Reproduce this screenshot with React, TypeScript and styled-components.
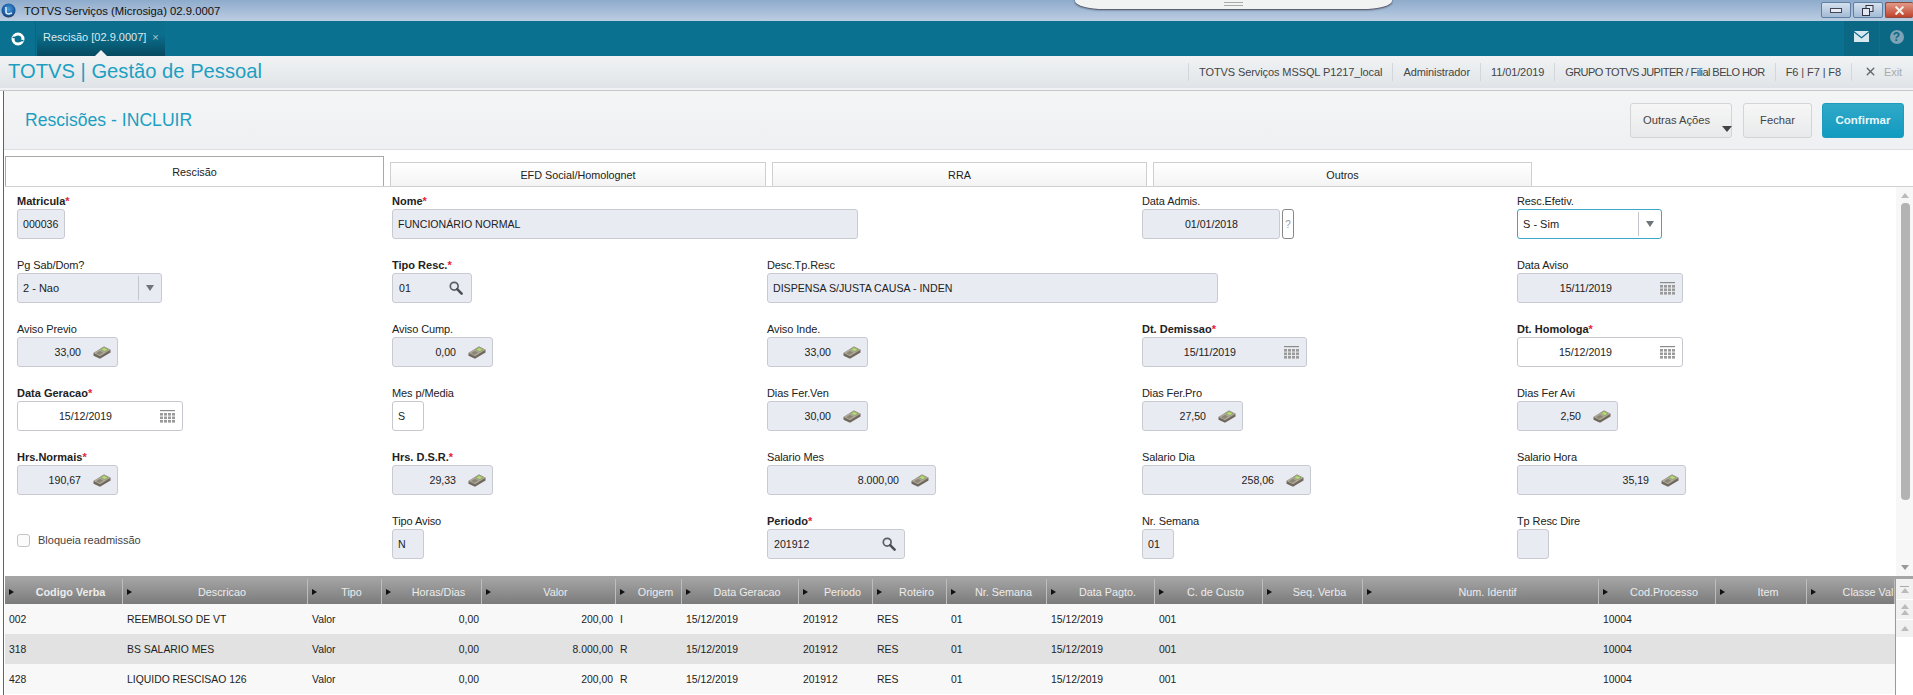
import React from 'react';
import styled, { createGlobalStyle } from 'styled-components';
import { X } from 'lucide-react';

const GlobalStyle = createGlobalStyle`
  html, body {
    margin: 0;
    padding: 0;
    background: #fff;
    overflow: hidden;
  }
  * { box-sizing: border-box; }
  body {
    font-family: "Liberation Sans", Arial, sans-serif;
    font-size: 11px;
    color: #222;
  }
`;

const Page = styled.div`
  width: 1913px;
  height: 695px;
  display: flex;
  flex-direction: column;
  overflow: hidden;
  position: relative;
`;

/* janela */
const TitleBar = styled.div`
  height: 21px;
  flex: none;
  display: flex;
  align-items: center;
  padding-left: 1px;
  gap: 8px;
  background: linear-gradient(#8eabcc, #bccde2);
  font-size: 11.3px;
  color: #111;
`;

const DockHandle = styled.div`
  position: absolute;
  left: 1075px;
  top: -6px;
  width: 317px;
  height: 15px;
  display: flex;
  flex-direction: column;
  align-items: center;
  justify-content: flex-end;
  gap: 2px;
  padding-bottom: 3px;
  background: #f1f2f2;
  border-radius: 0 0 30px 30px / 0 0 8px 8px;
  box-shadow: 0 1px 2px #445;
  span {
    width: 19px;
    height: 1px;
    background: #aaa;
  }
`;

const WindowButtons = styled.div`
  margin-left: auto;
  display: flex;
  gap: 2px;
  align-self: flex-start;
  padding-top: 2px;
`;

const WindowButton = styled.div<{ $close?: boolean }>`
  width: ${p => (p.$close ? '28px' : '30px')};
  height: 16px;
  display: flex;
  align-items: center;
  justify-content: center;
  border: 1px solid ${p => (p.$close ? '#8e4a3c' : '#5f7fa3')};
  border-right: ${p => (p.$close ? 'none' : undefined)};
  border-radius: 2px;
  background: ${p =>
    p.$close ? 'linear-gradient(#e09a88, #c0432c)' : 'linear-gradient(#d5e1ee, #a3bbd5)'};
`;

const NavBar = styled.div`
  height: 35px;
  flex: none;
  display: flex;
  background: #0b7190;
`;

const LogoCell = styled.div`
  width: 36px;
  display: flex;
  align-items: center;
  justify-content: center;
  border-right: 1px solid #0a6480;
`;

const NavTab = styled.div`
  width: 128px;
  margin-left: 1px;
  position: relative;
  display: flex;
  align-items: center;
  padding: 0 0 4px 6px;
  gap: 6px;
  color: #d9eaf0;
  background: linear-gradient(#0b6e8c 40%, #064a60);
  &::after {
    content: '';
    position: absolute;
    left: 58px;
    bottom: 0;
    border: 6px solid transparent;
    border-top: none;
    border-bottom: 6px solid #eef0f2;
  }
`;

const NavTabClose = styled.span`
  color: #a9c9d5;
  font-size: 11px;
`;

const NavActions = styled.div`
  margin-left: auto;
  display: flex;
`;

const NavAction = styled.div<{ $wide?: boolean }>`
  width: ${p => (p.$wide ? '33px' : '35px')};
  margin-left: 1px;
  display: flex;
  align-items: center;
  justify-content: center;
  padding-bottom: 4px;
  background: #0a6885;
`;

const HelpMark = styled.span`
  width: 14px;
  height: 14px;
  border-radius: 50%;
  background: #7ea3b4;
  color: #0a6885;
  font-size: 12px;
  font-weight: bold;
  line-height: 14px;
  text-align: center;
`;

/* cabecalho do modulo */
const BrandBar = styled.div`
  height: 35px;
  flex: none;
  display: flex;
  align-items: center;
  padding: 0 0 3px 8px;
  background: linear-gradient(#f1f3f4, #dfe3e7);
  border-bottom: 1px solid #c4c8cc;
  box-shadow: inset 0 -2px 0 #f1f2f3;
  position: relative;
`;

const Brand = styled.div`
  font-size: 20.2px;
  color: #1d9fc2;
`;

const Session = styled.div`
  margin-left: auto;
  display: flex;
  align-items: center;
  color: #444;
`;

const SessionItem = styled.div<{ $tight?: boolean }>`
  height: 18px;
  line-height: 18px;
  padding: 0 10px;
  border-left: 1px solid #d3d6da;
  white-space: nowrap;
  letter-spacing: ${p => (p.$tight ? '-0.56px' : '-0.1px')};
`;

const ExitItem = styled(SessionItem)`
  display: flex;
  align-items: center;
  gap: 7px;
  width: 62px;
  padding: 0 0 0 12px;
  color: #aaa;
`;

/* area principal */
const Main = styled.div`
  flex: 1;
  min-height: 0;
  margin-left: 3px;
  border-left: 1px solid #2d7494;
  padding-left: 1px;
  display: flex;
  flex-direction: column;
`;

const PageHeader = styled.div`
  height: 59px;
  flex: none;
  display: flex;
  align-items: center;
  padding: 0 9px 0 21px;
  background: linear-gradient(#f3f5f5, #eef0f3);
  border-bottom: 1px solid #dcdedf;
  margin-left: -1px;
`;

const PageTitle = styled.h1`
  margin: 0;
  font-size: 17.6px;
  font-weight: normal;
  color: #1d9fc2;
`;

const Actions = styled.div`
  margin-left: auto;
  display: flex;
  gap: 10px;
`;

const ActionButton = styled.button<{ $primary?: boolean }>`
  height: 35px;
  padding: 0;
  font-family: inherit;
  font-size: ${p => (p.$primary ? '11.5px' : '11.2px')};
  border-radius: 3px;
  display: flex;
  align-items: center;
  justify-content: center;
  color: ${p => (p.$primary ? '#e8f7fb' : '#444')};
  font-weight: ${p => (p.$primary ? 'bold' : 'normal')};
  border: 1px solid ${p => (p.$primary ? '#1f9cbd' : '#d2d4d6')};
  background: ${p =>
    p.$primary ? 'linear-gradient(#31a9c8, #119ac0)' : 'linear-gradient(#f6f6f6, #e9eaeb)'};
  width: ${p => (p.$primary ? '82px' : '69px')};
`;

const MenuButton = styled(ActionButton)`
  width: 102px;
  justify-content: flex-start;
  padding-left: 12px;
  margin-right: 1px;
  gap: 12px;
  white-space: nowrap;
  i {
    align-self: flex-end;
    margin-bottom: 5px;
    border: 5px solid transparent;
    border-bottom: none;
    border-top: 6px solid #444;
  }
`;

const Tabs = styled.div`
  height: 36px;
  flex: none;
  display: flex;
  align-items: flex-end;
  gap: 6px;
`;

const Tab = styled.div<{ $active?: boolean; $w: number }>`
  width: ${p => p.$w}px;
  height: ${p => (p.$active ? '30px' : '24px')};
  display: flex;
  align-items: center;
  justify-content: center;
  font-size: 10.8px;
  border: 1px solid ${p => (p.$active ? '#a8a8a8' : '#cfcfcf')};
  border-bottom: none;
  background: ${p => (p.$active ? '#fff' : 'linear-gradient(#fff, #f4f4f4)')};
`;

const FormArea = styled.div`
  height: 390px;
  flex: none;
  display: flex;
  border-top: 1px solid #d0d0d0;
`;

const FormGrid = styled.div`
  flex: 1;
  display: grid;
  grid-template-columns: repeat(5, 375px);
  grid-auto-rows: 64px;
  padding: 7px 0 0 12px;
`;

const Field = styled.div<{ $col: number }>`
  grid-column: ${p => p.$col};
`;

const Label = styled.div<{ $required?: boolean }>`
  height: 15px;
  line-height: 14px;
  font-size: 11px;
  font-weight: ${p => (p.$required ? 'bold' : 'normal')};
  letter-spacing: ${p => (p.$required ? '0' : '-0.1px')};
  color: #222;
  em {
    color: #e8203a;
    font-style: normal;
  }
`;

const Box = styled.div<{ $w: number; $open?: boolean; $focus?: boolean }>`
  width: ${p => p.$w}px;
  height: 30px;
  display: flex;
  align-items: center;
  padding-left: 5px;
  font-size: 10.6px;
  white-space: nowrap;
  color: #222;
  border: 1px solid ${p => (p.$focus ? '#3ba7c5' : p.$open ? '#c5c8cc' : '#c7cad0')};
  border-radius: 3px;
  background: ${p => (p.$open ? '#fff' : '#e8ebf2')};
`;

const NumberBox = styled(Box)`
  justify-content: flex-end;
  gap: 12px;
  padding-right: 6px;
`;

const DateBox = styled(Box)`
  justify-content: flex-end;
  gap: 48px;
  padding-right: 7px;
`;

const PlainDateBox = styled(Box)`
  justify-content: flex-end;
  padding-right: 41px;
`;

const LookupBox = styled(Box)`
  justify-content: space-between;
  padding-left: 6px;
  padding-right: 8px;
`;

const SelectBox = styled(Box)`
  padding-right: 0;
  justify-content: space-between;
  font-size: 11px;
`;

const SelectArrow = styled.div`
  width: 23px;
  height: 28px;
  display: flex;
  align-items: center;
  justify-content: center;
  position: relative;
  &::before {
    content: '';
    position: absolute;
    left: 0;
    top: 2px;
    bottom: 2px;
    width: 1px;
    background: #c2c5ca;
  }
  i {
    border: 4px solid transparent;
    border-bottom: none;
    border-top: 6px solid #6f747c;
  }
`;

const BoxRow = styled.div`
  display: flex;
  gap: 2px;
`;

const HintButton = styled.div`
  width: 12px;
  height: 30px;
  display: flex;
  align-items: center;
  justify-content: center;
  color: #999;
  font-size: 10px;
  border: 1px solid #888;
  border-radius: 3px;
  background: #fff;
`;

const CheckRow = styled.label`
  grid-column: 1;
  display: flex;
  align-items: flex-start;
  gap: 8px;
  padding-top: 20px;
  font-size: 11px;
  color: #444;
`;

const CheckBox = styled.span`
  width: 13px;
  height: 13px;
  border: 1px solid #c4c4c4;
  border-radius: 3px;
  background: #fbfbfb;
`;

const ScrollBar = styled.div`
  width: 17px;
  flex: none;
  display: flex;
  flex-direction: column;
  align-items: center;
  padding: 6px 0 6px 1px;
  background: #f7f7f7;
`;

const Arrow = styled.i<{ $down?: boolean }>`
  border: 4px solid transparent;
  ${p => (p.$down ? 'border-bottom: none;' : 'border-top: none;')}
  ${p => (p.$down ? 'border-top: 5px solid #999;' : 'border-bottom: 5px solid #bbb;')}
`;

const ScrollThumb = styled.div`
  width: 9px;
  height: 297px;
  margin-top: 5px;
  margin-bottom: auto;
  border-radius: 4px;
  background: #b3b3b3;
`;

/* grid de verbas */
const TableArea = styled.div`
  flex: 1;
  min-height: 0;
  display: flex;
  border-top: 3px solid #a4a4a4;
`;

const Table = styled.div`
  width: 1890px;
  flex: none;
  display: grid;
  grid-template-columns: 118px 185px 74px 100px 134px 66px 117px 74px 74px 100px 108px 108px 100px 236px 117px 91px 88px;
  grid-template-rows: 25px repeat(3, 30px);
  align-content: start;
  overflow: hidden;
`;

const HeadCell = styled.div<{ $indent?: number; $strong?: boolean }>`
  position: relative;
  display: flex;
  align-items: center;
  justify-content: center;
  padding-left: ${p => p.$indent ?? 14}px;
  white-space: nowrap;
  font-size: 10.8px;
  font-weight: ${p => (p.$strong ? 'bold' : 'normal')};
  color: #ececec;
  border-right: 1px solid #bdbdbd;
  background: linear-gradient(#a3a3a3, #7b7b7b);
  overflow: hidden;
  &::before {
    content: '';
    position: absolute;
    left: 4px;
    top: 10px;
    border: 3.5px solid transparent;
    border-right: none;
    border-left: 5px solid #111;
  }
`;

const Cell = styled.div<{ $odd: boolean; $right?: boolean }>`
  display: flex;
  align-items: center;
  justify-content: ${p => (p.$right ? 'flex-end' : 'flex-start')};
  padding: ${p => (p.$right ? '0 3px 0 0' : '0 0 0 4px')};
  font-size: 10.4px;
  white-space: nowrap;
  color: #222;
  background: ${p => (p.$odd ? '#f8f8f8' : '#e2e2e2')};
`;

const TableScroll = styled.div`
  flex: 1;
  border-left: 1px solid #9a9a9a;
  display: flex;
  flex-direction: column;
  background: #fff;
`;

const TableScrollButton = styled.div<{ $h: number }>`
  height: ${p => p.$h}px;
  display: flex;
  flex-direction: column;
  align-items: center;
  justify-content: center;
  gap: 1px;
  background: #f1f1f1;
  border-bottom: 1px solid #fff;
  b {
    width: 9px;
    height: 1px;
    background: #a9a9a9;
  }
`;

const CalcIcon = () => (
  <svg width="18" height="13" viewBox="0 0 18 13" style={{ flex: 'none' }}>
    <path d="M0.5 7 L11 0.5 L17.5 3.8 L17.5 6.5 L7 12.8 L0.5 9.8 Z" fill="#6f695d" />
    <path d="M0.5 7 L11 0.5 L17.5 3.8 L7 10.2 Z" fill="#b0a99a" />
    <path d="M7.8 3.4 L11 1.5 L15 3.6 L11.8 5.6 Z" fill="#b4dd72" stroke="#6f7a55" strokeWidth="0.4" />
    <path d="M3 7.2 L7 4.8 L10.2 6.6 L6.4 9 Z" fill="#8c8677" />
  </svg>
);

const CalendarIcon = () => {
  const cells: React.ReactElement[] = [];
  for (let r = 0; r < 3; r++) {
    for (let c = 0; c < 4; c++) {
      cells.push(<rect key={`${r}-${c}`} x={c * 4} y={3 + r * 3.5} width="3" height="2.6" fill="#9a9a9a" />);
    }
  }
  return (
    <svg width="15" height="13" viewBox="0 0 15 13" style={{ flex: 'none' }}>
      <rect x="0" y="0" width="15" height="1.2" fill="#8a8a8a" />
      {cells}
    </svg>
  );
};

const LensIcon = () => (
  <svg width="14" height="14" viewBox="0 0 14 14" style={{ flex: 'none' }}>
    <circle cx="5.2" cy="5.2" r="3.9" fill="none" stroke="#5a5f66" strokeWidth="1.7" />
    <path d="M8.2 8.2 L12.6 12.6" stroke="#4a4f56" strokeWidth="2.6" strokeLinecap="round" />
  </svg>
);

const LogoIcon = () => (
  <svg width="14" height="14" viewBox="0 0 14 14">
    <circle cx="7" cy="7" r="5" fill="none" stroke="#fff" strokeWidth="3" />
    <path d="M1.5 5.5 L5.5 5.2 M8.5 8.8 L12.5 8.5" stroke="#0b7190" strokeWidth="1.3" />
  </svg>
);

const AppIcon = () => (
  <svg width="15" height="15" viewBox="0 0 15 15">
    <defs>
      <radialGradient id="orb" cx="50%" cy="40%" r="60%">
        <stop offset="0%" stopColor="#4d9bd8" />
        <stop offset="70%" stopColor="#1a5fa8" />
        <stop offset="100%" stopColor="#24385a" />
      </radialGradient>
    </defs>
    <circle cx="7.5" cy="7.5" r="7" fill="url(#orb)" />
    <path d="M5 4 L5 9 Q5 11 8 11 L11 10" fill="none" stroke="#dcecf8" strokeWidth="1.6" />
  </svg>
);

const MailIcon = () => (
  <svg width="15" height="11" viewBox="0 0 15 11">
    <path d="M0 0 H15 L7.5 6 Z" fill="#d7e8ef" />
    <path d="M0 1.6 L7.5 7.6 L15 1.6 V11 H0 Z" fill="#d7e8ef" />
  </svg>
);

const RestoreIcon = () => (
  <svg width="12" height="11" viewBox="0 0 12 11">
    <rect x="4" y="0.5" width="7" height="6" fill="#dfe8f2" stroke="#334" />
    <rect x="0.5" y="3.5" width="7" height="7" fill="#dfe8f2" stroke="#334" />
  </svg>
);

type Kind = 'text' | 'number' | 'date' | 'plainDate' | 'select' | 'lookup';

type FieldDef = {
  col: number;
  label: string;
  required?: boolean;
  value: string;
  width: number;
  kind: Kind;
  open?: boolean;
  focus?: boolean;
  hint?: boolean;
};

const fields: FieldDef[] = [
  { col: 1, label: 'Matricula', required: true, value: '000036', width: 48, kind: 'text' },
  { col: 2, label: 'Nome', required: true, value: 'FUNCIONÁRIO NORMAL', width: 466, kind: 'text' },
  { col: 4, label: 'Data Admis.', value: '01/01/2018', width: 138, kind: 'plainDate', hint: true },
  { col: 5, label: 'Resc.Efetiv.', value: 'S - Sim', width: 145, kind: 'select', open: true, focus: true },

  { col: 1, label: 'Pg Sab/Dom?', value: '2 - Nao', width: 145, kind: 'select' },
  { col: 2, label: 'Tipo Resc.', required: true, value: '01', width: 80, kind: 'lookup' },
  { col: 3, label: 'Desc.Tp.Resc', value: 'DISPENSA S/JUSTA CAUSA - INDEN', width: 451, kind: 'text' },
  { col: 5, label: 'Data Aviso', value: '15/11/2019', width: 166, kind: 'date' },

  { col: 1, label: 'Aviso Previo', value: '33,00', width: 101, kind: 'number' },
  { col: 2, label: 'Aviso Cump.', value: '0,00', width: 101, kind: 'number' },
  { col: 3, label: 'Aviso Inde.', value: '33,00', width: 101, kind: 'number' },
  { col: 4, label: 'Dt. Demissao', required: true, value: '15/11/2019', width: 165, kind: 'date' },
  { col: 5, label: 'Dt. Homologa', required: true, value: '15/12/2019', width: 166, kind: 'date', open: true },

  { col: 1, label: 'Data Geracao', required: true, value: '15/12/2019', width: 166, kind: 'date', open: true },
  { col: 2, label: 'Mes p/Media', value: 'S', width: 32, kind: 'text', open: true },
  { col: 3, label: 'Dias Fer.Ven', value: '30,00', width: 101, kind: 'number' },
  { col: 4, label: 'Dias Fer.Pro', value: '27,50', width: 101, kind: 'number' },
  { col: 5, label: 'Dias Fer Avi', value: '2,50', width: 101, kind: 'number' },

  { col: 1, label: 'Hrs.Normais', required: true, value: '190,67', width: 101, kind: 'number' },
  { col: 2, label: 'Hrs. D.S.R.', required: true, value: '29,33', width: 101, kind: 'number' },
  { col: 3, label: 'Salario Mes', value: '8.000,00', width: 169, kind: 'number' },
  { col: 4, label: 'Salario Dia', value: '258,06', width: 169, kind: 'number' },
  { col: 5, label: 'Salario Hora', value: '35,19', width: 169, kind: 'number' },
];

const lastRowFields: FieldDef[] = [
  { col: 2, label: 'Tipo Aviso', value: 'N', width: 32, kind: 'text' },
  { col: 3, label: 'Periodo', required: true, value: '201912', width: 138, kind: 'lookup' },
  { col: 4, label: 'Nr. Semana', value: '01', width: 32, kind: 'text' },
  { col: 5, label: 'Tp Resc Dire', value: '', width: 32, kind: 'text' },
];

const columns: { title: string; right?: boolean; strong?: boolean; indent?: number }[] = [
  { title: 'Codigo Verba', strong: true },
  { title: 'Descricao' },
  { title: 'Tipo' },
  { title: 'Horas/Dias', right: true },
  { title: 'Valor', right: true },
  { title: 'Origem' },
  { title: 'Data Geracao' },
  { title: 'Periodo' },
  { title: 'Roteiro' },
  { title: 'Nr. Semana' },
  { title: 'Data Pagto.' },
  { title: 'C. de Custo' },
  { title: 'Seq. Verba' },
  { title: 'Num. Identif' },
  { title: 'Cod.Processo' },
  { title: 'Item' },
  { title: 'Classe Val', indent: 35 },
];

const rows = [
  ['002', 'REEMBOLSO DE VT', 'Valor', '0,00', '200,00', 'I', '15/12/2019', '201912', 'RES', '01', '15/12/2019', '001', '', '', '10004', '', ''],
  ['318', 'BS SALARIO MES', 'Valor', '0,00', '8.000,00', 'R', '15/12/2019', '201912', 'RES', '01', '15/12/2019', '001', '', '', '10004', '', ''],
  ['428', 'LIQUIDO RESCISAO 126', 'Valor', '0,00', '200,00', 'R', '15/12/2019', '201912', 'RES', '01', '15/12/2019', '001', '', '', '10004', '', ''],
];

const FieldInput: React.FC<{ def: FieldDef }> = ({ def }) => {
  const common = { $w: def.width, $open: def.open, $focus: def.focus };
  switch (def.kind) {
    case 'number':
      return (
        <NumberBox {...common}>
          {def.value}
          <CalcIcon />
        </NumberBox>
      );
    case 'date':
      return (
        <DateBox {...common}>
          {def.value}
          <CalendarIcon />
        </DateBox>
      );
    case 'plainDate':
      return <PlainDateBox {...common}>{def.value}</PlainDateBox>;
    case 'select':
      return (
        <SelectBox {...common}>
          {def.value}
          <SelectArrow>
            <i />
          </SelectArrow>
        </SelectBox>
      );
    case 'lookup':
      return (
        <LookupBox {...common}>
          {def.value}
          <LensIcon />
        </LookupBox>
      );
    default:
      return <Box {...common}>{def.value}</Box>;
  }
};

const FormField: React.FC<{ def: FieldDef }> = ({ def }) => (
  <Field $col={def.col}>
    <Label $required={def.required}>
      {def.label}
      {def.required && <em>*</em>}
    </Label>
    {def.hint ? (
      <BoxRow>
        <FieldInput def={def} />
        <HintButton>?</HintButton>
      </BoxRow>
    ) : (
      <FieldInput def={def} />
    )}
  </Field>
);

const App: React.FC = () => {
  return (
    <Page>
      <GlobalStyle />
      <TitleBar>
        <AppIcon />
        TOTVS Serviços (Microsiga) 02.9.0007
        <WindowButtons>
          <WindowButton>
            <svg width="12" height="5" viewBox="0 0 12 5">
              <rect x="0.5" y="0.5" width="11" height="4" fill="#e6edf5" stroke="#445" />
            </svg>
          </WindowButton>
          <WindowButton>
            <RestoreIcon />
          </WindowButton>
          <WindowButton $close>
            <X size={13} strokeWidth={4} color="#f4efe9" />
          </WindowButton>
        </WindowButtons>
      </TitleBar>
      <DockHandle>
        <span />
        <span />
      </DockHandle>

      <NavBar>
        <LogoCell>
          <LogoIcon />
        </LogoCell>
        <NavTab>
          Rescisão [02.9.0007]
          <NavTabClose>×</NavTabClose>
        </NavTab>
        <NavActions>
          <NavAction>
            <MailIcon />
          </NavAction>
          <NavAction $wide>
            <HelpMark>?</HelpMark>
          </NavAction>
        </NavActions>
      </NavBar>

      <BrandBar>
        <Brand>TOTVS | Gestão de Pessoal</Brand>
        <Session>
          <SessionItem>TOTVS Serviços MSSQL P1217_local</SessionItem>
          <SessionItem>Administrador</SessionItem>
          <SessionItem>11/01/2019</SessionItem>
          <SessionItem $tight>GRUPO TOTVS JUPITER / Filial BELO HOR</SessionItem>
          <SessionItem>F6 | F7 | F8</SessionItem>
          <ExitItem>
            <X size={13} strokeWidth={2.6} color="#666" />
            Exit
          </ExitItem>
        </Session>
      </BrandBar>

      <Main>
        <PageHeader>
          <PageTitle>Rescisões - INCLUIR</PageTitle>
          <Actions>
            <MenuButton>
              Outras Ações
              <i />
            </MenuButton>
            <ActionButton>Fechar</ActionButton>
            <ActionButton $primary>Confirmar</ActionButton>
          </Actions>
        </PageHeader>

        <Tabs>
          <Tab $active $w={379}>Rescisão</Tab>
          <Tab $w={376}>EFD Social/Homolognet</Tab>
          <Tab $w={375}>RRA</Tab>
          <Tab $w={379}>Outros</Tab>
        </Tabs>

        <FormArea>
          <FormGrid>
            {fields.map(f => (
              <FormField key={f.label} def={f} />
            ))}
            <CheckRow>
              <CheckBox />
              Bloqueia readmissão
            </CheckRow>
            {lastRowFields.map(f => (
              <FormField key={f.label} def={f} />
            ))}
          </FormGrid>
          <ScrollBar>
            <Arrow />
            <ScrollThumb />
            <Arrow $down />
          </ScrollBar>
        </FormArea>

        <TableArea>
          <Table>
            {columns.map(c => (
              <HeadCell key={c.title} $strong={c.strong} $indent={c.indent}>
                {c.title}
              </HeadCell>
            ))}
            {rows.map((row, r) =>
              row.map((value, c) => (
                <Cell key={`${r}-${c}`} $odd={r % 2 === 0} $right={columns[c].right}>
                  {value}
                </Cell>
              ))
            )}
          </Table>
          <TableScroll>
            <TableScrollButton $h={21}>
              <b />
              <Arrow />
            </TableScrollButton>
            <TableScrollButton $h={20}>
              <Arrow />
              <Arrow />
            </TableScrollButton>
            <TableScrollButton $h={18}>
              <Arrow />
            </TableScrollButton>
          </TableScroll>
        </TableArea>
      </Main>
    </Page>
  );
};

export default App;
